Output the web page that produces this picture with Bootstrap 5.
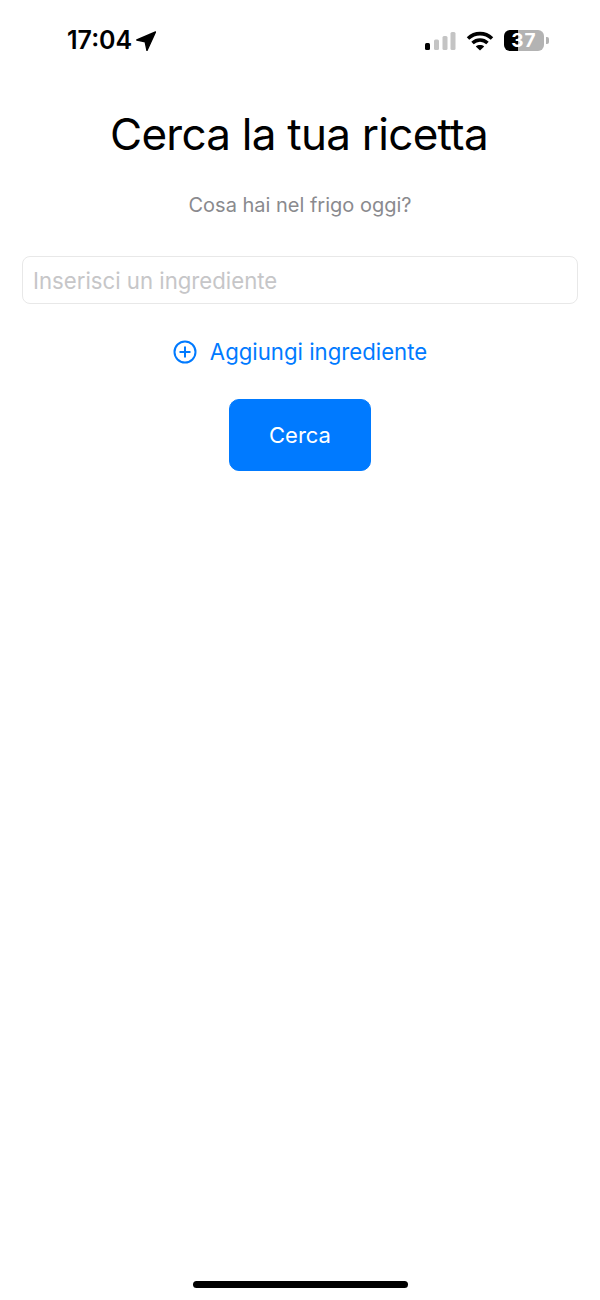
<!DOCTYPE html>
<html lang="it">
<head>
    <meta charset="UTF-8">
    <meta name="viewport" content="width=device-width, initial-scale=1.0">
    <title>Cerca la tua ricetta</title>
    <link rel="stylesheet" href="https://cdn.jsdelivr.net/npm/bootstrap@5.3.0/dist/css/bootstrap.min.css">
    <style>
        body {
            background-color: #fff;
            font-family: Inter, "Liberation Sans", sans-serif;
        }
        .phone {
            height: 1300px;
            width: 600px;
            overflow: hidden;
        }
        .status-bar {
            height: 80px;
            padding: 27px 51px 0 67px;
        }
        .clock {
            font-size: 25px;
            font-weight: 600;
            line-height: 27px;
            color: #000;
        }
        .status-right {
            margin-top: 3px;
        }
        .wifi-icon {
            margin: 0 10px;
        }
        .battery {
            width: 40px;
            height: 21px;
            border-radius: 6px;
            font-size: 19px;
            font-weight: 700;
            line-height: 21px;
            letter-spacing: 1px;
            color: #fff;
            text-align: center;
            background: linear-gradient(to right, #000 0 35%, #b3b3b3 35% 100%);
        }
        .battery-tip {
            width: 3px;
            height: 7px;
            border-radius: 0 2px 2px 0;
            background: #b3b3b3;
            margin-left: 2px;
        }
        .page-title {
            font-size: 44px;
            font-weight: 400;
            line-height: 54px;
            margin: 27px 2px 0 0;
            color: #000;
            letter-spacing: -0.75px;
        }
        .page-sub {
            font-size: 20px;
            line-height: 24px;
            margin: 32px 0 0;
            color: #8a8a8e;
        }
        .ingredient-input.form-control {
            margin: 39px 22px 0;
            width: 556px;
            height: 48px;
            padding: 0 10px;
            font-size: 22.2px;
            border: 1px solid #e8e8e8;
            border-radius: 8px;
            color: #000;
        }
        .ingredient-input.form-control::placeholder {
            color: #c6c6c8;
            opacity: 1;
        }
        .add-link {
            margin-top: 34px;
            height: 28px;
            font-size: 22.2px;
            line-height: 28px;
            color: #007aff;
            gap: 13px;
        }
        .search-btn.btn {
            margin-top: 33px;
            width: 142px;
            height: 72px;
            font-size: 22px;
            border-radius: 10px;
            background-color: #007aff;
            border-color: #007aff;
            color: #fff;
        }
        .home-bar {
            width: 215px;
            height: 7px;
            border-radius: 4px;
            background: #000;
            margin-bottom: 12px;
        }
    </style>
</head>
<body>
    <div class="phone d-flex flex-column">
        <!-- Status bar -->
        <div class="status-bar d-flex justify-content-between align-items-start">
            <div class="d-flex align-items-center gap-1">
                <span class="clock">17:04</span>
                <svg width="20" height="20" viewBox="0 0 20 20"><path d="M19.5 1 L11 19.5 L9.2 10.8 L0.8 9 Z" fill="#000" stroke="#000" stroke-width="1.4" stroke-linejoin="round"/></svg>
            </div>
            <div class="status-right d-flex align-items-center">
                <svg width="32" height="20" viewBox="0 0 32 20">
                    <rect x="1" y="12" width="5" height="7" rx="1.5" fill="#000"/>
                    <rect x="10" y="8.5" width="5" height="10.5" rx="1.5" fill="#c4c4c4"/>
                    <rect x="18.5" y="5" width="5" height="14" rx="1.5" fill="#c4c4c4"/>
                    <rect x="26.5" y="1" width="5" height="18" rx="1.5" fill="#c4c4c4"/>
                </svg>
                <svg class="wifi-icon" width="28" height="20" viewBox="0 0 28 20" fill="none" stroke="#000" stroke-width="3.6">
                    <path d="M2 7.5 C9 1 19 1 26 7.5"/>
                    <path d="M6.5 12 C11 8 17 8 21.5 12"/>
                    <path d="M14 19.5 L9.8 15.5 C12 13.6 16 13.6 18.2 15.5 Z" fill="#000" stroke="none"/>
                </svg>
                <div class="battery">37</div>
                <div class="battery-tip"></div>
            </div>
        </div>

        <!-- Contenuto -->
        <div class="d-flex flex-column align-items-center flex-grow-1 text-center">
            <h1 class="page-title">Cerca la tua ricetta</h1>
            <p class="page-sub">Cosa hai nel frigo oggi?</p>
            <input type="text" class="form-control ingredient-input" placeholder="Inserisci un ingrediente">
            <div class="add-link d-flex align-items-center">
                <svg width="24" height="24" viewBox="0 0 24 24" fill="none" stroke="#007aff" stroke-width="2">
                    <circle cx="12" cy="12" r="10.5"/>
                    <path d="M12 6.5 V17.5 M6.5 12 H17.5"/>
                </svg>
                <span>Aggiungi ingrediente</span>
            </div>
            <button class="btn search-btn">Cerca</button>
        </div>

        <div class="home-bar align-self-center"></div>
    </div>
    <script src="https://cdn.jsdelivr.net/npm/bootstrap@5.3.0/dist/js/bootstrap.bundle.min.js"></script>
</body>
</html>
